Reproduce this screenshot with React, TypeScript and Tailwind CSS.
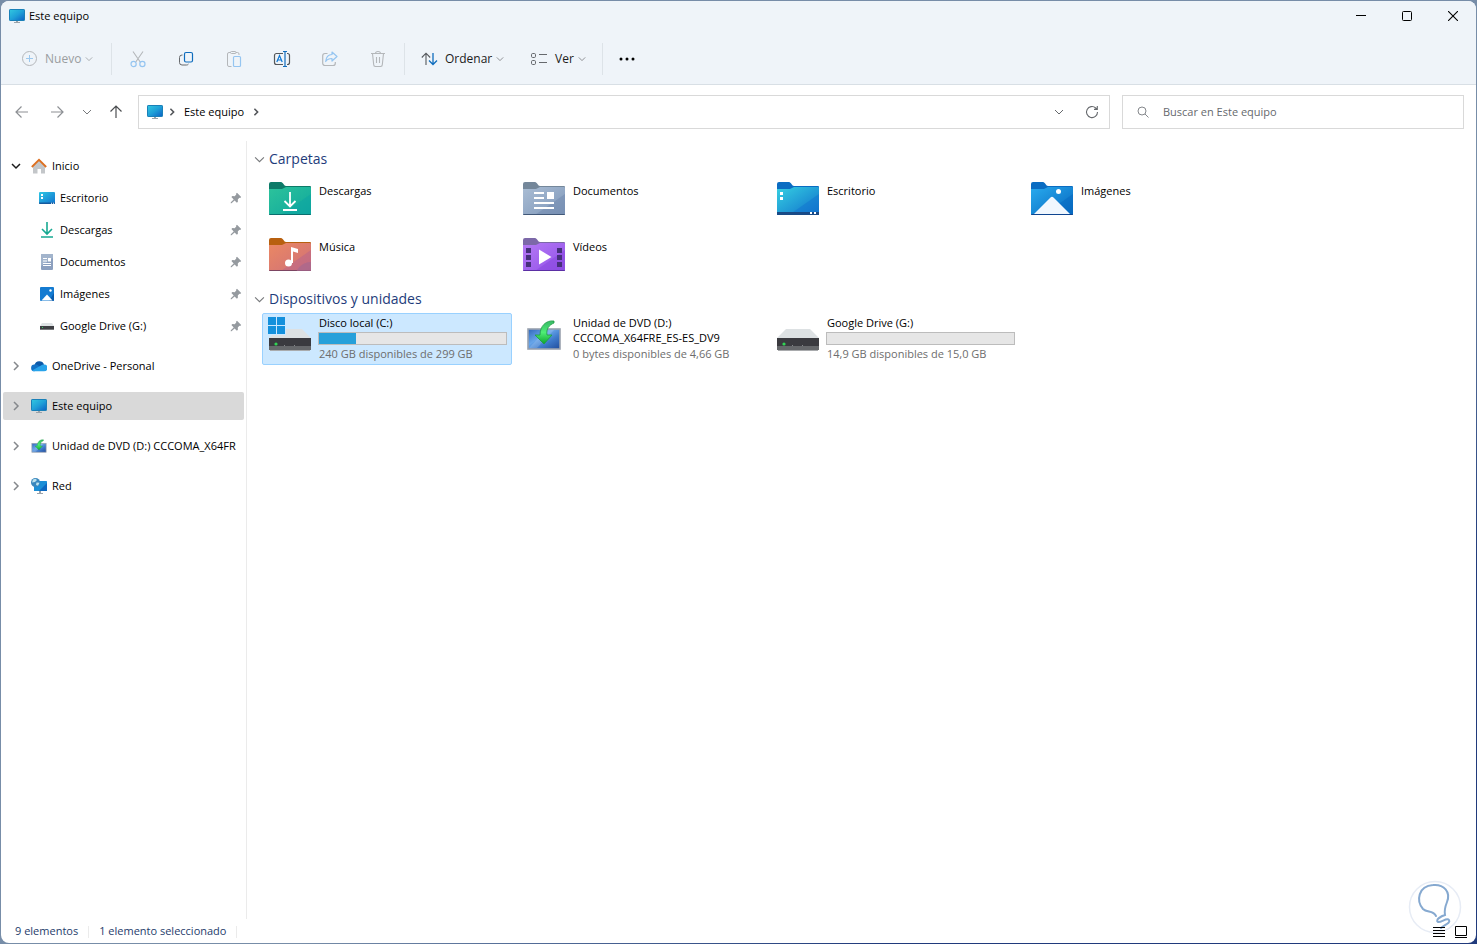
import { useState, type ReactNode } from "react";

type TreeItem = { id: string; label: string; icon: ReactNode };

type Drive = {
  id: string;
  lines: string[];
  free: string;
  icon: ReactNode;
  used?: number;
};

/* ---------- small glyphs ---------- */

type Dir = "down" | "right";

function Chevron({ dir, className = "", size = 10, weight = 1 }: { dir: Dir; className?: string; size?: number; weight?: number }) {
  return (
    <svg width={size} height={size} viewBox="0 0 10 10" fill="none" stroke="currentColor" strokeWidth={weight} className={`shrink-0 ${className}`}>
      <path d={dir === "down" ? "M1 3l4 4 4-4" : "M3 1l4 4-4 4"} />
    </svg>
  );
}

function PlusCircle() {
  return (
    <svg width="16" height="16" viewBox="0 0 16 16" fill="none" className="shrink-0">
      <circle cx="8.500" cy="7.500" r="7" stroke="#b4b7ba" />
      <path d="M8.500 4v7M5 7.500h7" stroke="#9cc8ee" />
    </svg>
  );
}

function CutIcon() {
  return (
    <svg width="18" height="18" viewBox="0 0 18 18" fill="none">
      <path d="M4 1.500l7.400 10.800M14 1.500L6.600 12.300" stroke="#b4b7ba" strokeWidth="1.100" />
      <circle cx="4.600" cy="14" r="2.600" stroke="#95c5f1" strokeWidth="1.200" />
      <circle cx="13.400" cy="14" r="2.600" stroke="#95c5f1" strokeWidth="1.200" />
    </svg>
  );
}

function CopyIcon() {
  return (
    <svg width="18" height="18" viewBox="0 0 18 18" fill="none">
      <path d="M5.500 5H5A2.500 2.500 0 0 0 2.500 7.500v5A2.500 2.500 0 0 0 5 15h4.500a2.500 2.500 0 0 0 2-1" stroke="#66696d" />
      <rect x="7.500" y="2.500" width="8" height="9.500" rx="1.500" stroke="#0f6cbd" strokeWidth="1.200" />
    </svg>
  );
}

function PasteIcon() {
  return (
    <svg width="18" height="18" viewBox="0 0 18 18" fill="none">
      <path d="M6.500 16.500H4A1.500 1.500 0 0 1 2.500 15V4A1.500 1.500 0 0 1 4 2.500h1.500M11 2.500h1.500A1.500 1.500 0 0 1 14 4v1" stroke="#b4b7ba" />
      <rect x="5.500" y="1.500" width="5.500" height="2" rx="1" stroke="#b4b7ba" />
      <rect x="8.500" y="6.500" width="7" height="10" rx="1" stroke="#95c5f1" strokeWidth="1.200" />
    </svg>
  );
}

function RenameIcon() {
  return (
    <svg width="18" height="18" viewBox="0 0 18 18" fill="none">
      <path d="M10 3.500H3.500a2 2 0 0 0-2 2v7a2 2 0 0 0 2 2H10M14 3.500h.5a2 2 0 0 1 2 2v7a2 2 0 0 1-2 2H14" stroke="#55585c" strokeWidth="1.200" />
      <path d="M12 1.500v15M10 1.500h4M10 16.500h4" stroke="#0f6cbd" strokeWidth="1.200" />
      <path d="M3.800 12L6.500 5.500 9.200 12M4.800 10h3.400" stroke="#0f78d4" strokeWidth="1.200" />
    </svg>
  );
}

function ShareIcon() {
  return (
    <svg width="18" height="18" viewBox="0 0 18 18" fill="none">
      <path d="M6.500 3.500H4a2.300 2.300 0 0 0-2.300 2.300V13A2.300 2.300 0 0 0 4 15.500h8a2.300 2.300 0 0 0 2.300-2.300V12" stroke="#b4b7ba" strokeWidth="1.200" />
      <path d="M11 2l5 4.500-5 4.500V8.500C8 8.500 6 9.500 4.700 11.500 5 7.500 7.500 4.700 11 4.500z" stroke="#95c5f1" strokeWidth="1.200" strokeLinejoin="round" />
    </svg>
  );
}

function TrashIcon() {
  return (
    <svg width="18" height="18" viewBox="0 0 18 18" fill="none" stroke="#b4b7ba" strokeWidth="1.100">
      <path d="M2 3.500h14M6.500 3.500a2.500 2 0 0 1 5 0M3.500 3.500l1.200 11.300a1.700 1.700 0 0 0 1.700 1.700h5.200a1.700 1.700 0 0 0 1.700-1.700l1.200-11.300M7.500 7v6M10.500 7v6" />
    </svg>
  );
}

function SortIcon() {
  return (
    <svg width="18" height="14" viewBox="0 0 18 14" fill="none" strokeWidth="1.100" className="shrink-0">
      <path d="M5 13V1.500M.8 5.500L5 1.200l4.200 4.300" stroke="#55585c" />
      <path d="M12 1v11.500M8 8.500l4 4 4-4" stroke="#0f6cbd" strokeWidth="1.300" />
    </svg>
  );
}

function ViewIcon() {
  return (
    <svg width="18" height="14" viewBox="0 0 18 14" fill="none" stroke="#66696d" className="shrink-0">
      <rect x=".500" y="1.500" width="4" height="4" rx="1.200" />
      <rect x=".500" y="8.500" width="4" height="4" rx="1.200" />
      <path d="M8 2.500h8M8 10.500h8" />
    </svg>
  );
}

function Arrow({ turn = "" }: { turn?: string }) {
  return (
    <svg width="14" height="14" viewBox="0 0 14 14" fill="none" stroke="currentColor" strokeWidth="1.200" className={turn}>
      <path d="M13 7H1.500M6.500 1.500L1 7l5.500 5.500" />
    </svg>
  );
}

function RefreshIcon() {
  return (
    <svg width="14" height="14" viewBox="0 0 14 14" fill="none" stroke="#66696d" strokeWidth="1.100">
      <path d="M12.500 7a5.500 5.500 0 1 1-1.800-4L12 4.200M12.300 1v3.400H9" />
    </svg>
  );
}

function SearchIcon() {
  return (
    <svg width="12" height="12" viewBox="0 0 12 12" fill="none" stroke="#85888c">
      <circle cx="5" cy="5" r="4" />
      <path d="M8 8l3.500 3.500" />
    </svg>
  );
}

function PinIcon() {
  return (
    <svg width="12" height="12" viewBox="0 0 12 12" className="shrink-0" fill="#959a9f">
      <path d="M7 .8L11.200 5l-1 1-.8-.2-1.600 1.600.1 2.300-1 1L4.600 8.400 1.500 11.300l-.8-.1.1-.9L3.700 7.400 1.400 5.100l1-1 2.300.1 1.600-1.600L6 1.800z" />
    </svg>
  );
}

/* ---------- coloured icons ---------- */

function MonitorIcon({ id }: { id: string }) {
  return (
    <svg width="16" height="16" viewBox="0 0 16 16" className="shrink-0">
      <linearGradient id={id} x1="0" y1="0" x2="1" y2="1">
        <stop offset="0" stopColor="#32c8e0" />
        <stop offset=".5" stopColor="#1fa0d8" />
        <stop offset="1" stopColor="#0c60c4" />
      </linearGradient>
      <path d="M7 13h2v1h2v1H5v-1h2z" fill="#9aa3ab" />
      <rect x=".500" y="1.500" width="15" height="11" rx=".6" fill={`url(#${id})`} stroke="#1a80b8" />
    </svg>
  );
}

function HomeIcon() {
  return (
    <svg width="16" height="16" viewBox="0 0 16 16" className="shrink-0">
      <path d="M2 8l6-6 6 6v7.500H10V11H6.500v4.500H2z" fill="#c3c6c9" />
      <path d="M.8 9L8 1.800 15.200 9" fill="none" stroke="#dd7021" strokeWidth="1.800" />
    </svg>
  );
}

function DesktopSmall() {
  return (
    <svg width="16" height="16" viewBox="0 0 16 16" className="shrink-0">
      <linearGradient id="desk-s" x1="0" y1="0" x2="1" y2="1">
        <stop offset="0" stopColor="#30c8e4" />
        <stop offset="1" stopColor="#0f72cf" />
      </linearGradient>
      <rect y="2" width="16" height="12" rx="1" fill="url(#desk-s)" />
      <path d="M0 12.500h16v.5a1 1 0 0 1-1 1H1a1 1 0 0 1-1-1z" fill="#155a9e" />
      <path d="M2 4h2v2H2zM2 7h2v2H2zM12 12.700h1v1h-1zM14 12.700h1v1h-1z" fill="#fff" />
    </svg>
  );
}

function DownloadSmall() {
  return (
    <svg width="16" height="16" viewBox="0 0 16 16" fill="none" stroke="#17a992" strokeWidth="1.600" className="shrink-0">
      <path d="M8 0v12M3 7l5 5 5-5M2 15h12" />
    </svg>
  );
}

function DocumentSmall() {
  return (
    <svg width="16" height="16" viewBox="0 0 16 16" className="shrink-0">
      <rect x="2" width="12" height="16" rx="1" fill="#8ca0bf" />
      <path d="M2 1a1 1 0 0 1 1-1h10a1 1 0 0 1 1 1v3L2 12z" fill="#a2b4cc" />
      <path d="M4 4h4v1H4zM4 6.500h4v1H4zM9 4h3v3.500H9zM4 9h8v1H4zM4 11h8v1H4z" fill="#fff" />
    </svg>
  );
}

function PictureSmall() {
  return (
    <svg width="16" height="16" viewBox="0 0 16 16" className="shrink-0">
      <rect x="1" y="1" width="14" height="14" rx="1" fill="#147bd1" />
      <path d="M10 15h4a1 1 0 0 0 1-1V7z" fill="#0a5cad" />
      <path d="M2.500 14.500l5.500-6 5.500 6z" fill="#fff" />
      <circle cx="11.500" cy="4.500" r="1.200" fill="#fff" />
    </svg>
  );
}

function DriveSmall() {
  return (
    <svg width="16" height="16" viewBox="0 0 16 16" className="shrink-0">
      <path d="M3 5h10l2 3H1z" fill="#dfe3e5" />
      <path d="M1 8h14v4H1z" fill="#3e3f43" />
      <path d="M1 11h14v1H1z" fill="#77797c" />
      <path d="M3 9h1v1H3z" fill="#37d35f" />
    </svg>
  );
}

function CloudIcon() {
  return (
    <svg width="16" height="16" viewBox="0 0 16 16" className="shrink-0">
      <path d="M3.500 7A5 5 0 0 1 13 6.500L9 10H2z" fill="#0c59a8" />
      <path d="M3.500 6.500A3.400 3.400 0 0 0 3.500 13.300L10 9.500 7 7.200a4 4 0 0 0-3.500-.7z" fill="#1272c6" />
      <path d="M1 12.500l9-5a4 4 0 0 1 3-1.100A3.400 3.400 0 0 1 13 13.300H3.500A3.400 3.400 0 0 1 1 12.500z" fill="#28a3ea" />
    </svg>
  );
}

function InstallDisc({ size, id }: { size: number; id: string }) {
  return (
    <svg width={size} height={size} viewBox="0 0 36 36" className="shrink-0">
      <linearGradient id={`${id}-s`} x1="0" y1="0" x2="1" y2="1">
        <stop offset="0" stopColor="#2f66ba" />
        <stop offset=".4" stopColor="#67a5e9" />
        <stop offset=".65" stopColor="#3e7acb" />
        <stop offset="1" stopColor="#214c9b" />
      </linearGradient>
      <linearGradient id={`${id}-a`} x1="0" y1="0" x2="0" y2="1">
        <stop offset="0" stopColor="#38b866" />
        <stop offset=".5" stopColor="#4eee76" />
        <stop offset="1" stopColor="#0da32c" />
      </linearGradient>
      <rect x="2" y="12" width="32" height="20" fill={`url(#${id}-s)`} stroke="#9aa2ae" strokeWidth="1.600" />
      <path d="M3 31L20 13h8L11 31z" fill="#fff" opacity=".15" />
      <path d="M28 4C20 3 14 9 14 18H9l9 9 8-9h-5c-1-6 2-10 7-12z" fill={`url(#${id}-a)`} stroke="#1e9b43" strokeWidth=".8" />
    </svg>
  );
}

function NetworkIcon() {
  return (
    <svg width="16" height="16" viewBox="0 0 16 16" className="shrink-0">
      <path d="M8 13h2v2h2v1H6v-1h2z" fill="#9aa3ab" />
      <rect x="3" y="3" width="13" height="10" rx=".6" fill="#1b8fd6" />
      <path d="M16 5v8H8z" fill="#0c68c0" />
      <circle cx="4.500" cy="4.500" r="4.500" fill="#3987bd" />
      <path d="M2 1.500l2.500-.8L6 2 4 4 1 4.500zM5.500 4.500l3 .3L7 7.800 5 7z" fill="#bce2ee" />
    </svg>
  );
}

type FolderColors = { back: string; from: string; to: string; shade: string; edge: string };

function Folder({ id, colors, children }: { id: string; colors: FolderColors; children: ReactNode }) {
  return (
    <svg width="42" height="34" viewBox="0 0 42 34" className="shrink-0">
      <defs>
        <linearGradient id={id} x1="0" y1="0" x2="1" y2="1">
          <stop offset="0" stopColor={colors.from} />
          <stop offset="1" stopColor={colors.to} />
        </linearGradient>
        <clipPath id={`${id}-clip`}>
          <path d="M0 7h13l4-2h24a1 1 0 0 1 1 1v26a1 1 0 0 1-1 1H1a1 1 0 0 1-1-1z" />
        </clipPath>
      </defs>
      <path d="M0 2a2 2 0 0 1 2-2h10c2 0 3 4 5 4h24a1 1 0 0 1 1 1v6H0z" fill={colors.back} />
      <g clipPath={`url(#${id}-clip)`}>
        <path d="M0 5h42v28H0z" fill={`url(#${id})`} />
        <path d="M42 12v21H12z" fill={colors.shade} opacity=".5" />
        <path d="M0 32h42v1H0z" fill={colors.edge} />
        {children}
      </g>
    </svg>
  );
}

function HardDrive({ windows = false }: { windows?: boolean }) {
  return (
    <svg width="42" height="34" viewBox="0 0 42 34" className="shrink-0 overflow-visible">
      <path d="M9 11h24l9 9v3H0v-3z" fill="#dde1e3" />
      <path d="M0 20h42v8H0z" fill="#3a3a3f" />
      <path d="M0 28h42v4H0z" fill="#66686b" />
      <path d="M1 32h40v1H1z" fill="#a9abad" />
      <circle cx="7" cy="26" r="1.600" fill="#31d553" />
      <path d="M15 27h1v1h-1zM25 27h1v1h-1z" fill="#85878a" />
      {windows && (
        <>
          <path d="M-1-1h18v18H-1z" fill="#cce8ff" />
          <path d="M-1-1h8v8h-8zM8-1h8v8H8zM-1 8h8v8h-8zM8 8h8v8H8z" fill="#1490dc" />
        </>
      )}
    </svg>
  );
}

/* ---------- data ---------- */

const QUICK_ACCESS: TreeItem[] = [
  { id: "desktop", label: "Escritorio", icon: <DesktopSmall /> },
  { id: "downloads", label: "Descargas", icon: <DownloadSmall /> },
  { id: "documents", label: "Documentos", icon: <DocumentSmall /> },
  { id: "pictures", label: "Imágenes", icon: <PictureSmall /> },
  { id: "gdrive", label: "Google Drive (G:)", icon: <DriveSmall /> },
];

const ROOTS: TreeItem[] = [
  { id: "onedrive", label: "OneDrive - Personal", icon: <CloudIcon /> },
  { id: "pc", label: "Este equipo", icon: <MonitorIcon id="mon-tree" /> },
  { id: "dvd", label: "Unidad de DVD (D:) CCCOMA_X64FR", icon: <InstallDisc size={16} id="disc-s" /> },
  { id: "network", label: "Red", icon: <NetworkIcon /> },
];

const FOLDERS: TreeItem[] = [
  {
    id: "downloads",
    label: "Descargas",
    icon: (
      <Folder id="f-down" colors={{ back: "#0d7a68", from: "#2cc39b", to: "#10a79d", shade: "#0ba3a3", edge: "#0b6e6e" }}>
        <path d="M21 10v14M15.500 19l5.500 5.500 5.500-5.500M14 28h14" fill="none" stroke="#fff" strokeWidth="1.800" />
      </Folder>
    ),
  },
  {
    id: "documents",
    label: "Documentos",
    icon: (
      <Folder id="f-docs" colors={{ back: "#74879a", from: "#aabdd4", to: "#7e97b9", shade: "#7088ad", edge: "#415878" }}>
        <path d="M11 10h10v2H11zM11 15h10v2H11zM24 10h7v7h-7zM11 20h20v2H11zM11 25h20v2H11z" fill="#fff" />
      </Folder>
    ),
  },
  {
    id: "desktop",
    label: "Escritorio",
    icon: (
      <Folder id="f-desk" colors={{ back: "#0a6cc2", from: "#36d0e2", to: "#0f6fcb", shade: "#1174cf", edge: "#123c7c" }}>
        <path d="M0 30h42v3H0z" fill="#194a86" />
        <path d="M3 10h3v3H3zM3 15h3v3H3zM33 30h2v2h-2zM37 30h2v2h-2z" fill="#fff" />
      </Folder>
    ),
  },
  {
    id: "pictures",
    label: "Imágenes",
    icon: (
      <Folder id="f-pics" colors={{ back: "#0a6cc2", from: "#29abee", to: "#0666be", shade: "#0668c0", edge: "#0f4590" }}>
        <path d="M3 32l16.500-16.500a2 2 0 0 1 3 0L39 32z" fill="#f0f7fe" />
        <circle cx="27.500" cy="9.500" r="2.500" fill="#fff" />
      </Folder>
    ),
  },
  {
    id: "music",
    label: "Música",
    icon: (
      <Folder id="f-music" colors={{ back: "#b8600f", from: "#eb8863", to: "#cf7078", shade: "#b8648c", edge: "#7c4562" }}>
        <circle cx="42" cy="40" r="16" fill="#a7688f" opacity=".7" />
        <circle cx="19.500" cy="25" r="3.500" fill="#fff" />
        <path d="M22 9l7 2v4l-5-1.500V25h-2z" fill="#fff" />
      </Folder>
    ),
  },
  {
    id: "videos",
    label: "Vídeos",
    icon: (
      <Folder id="f-video" colors={{ back: "#7c68a8", from: "#b57af5", to: "#9150e8", shade: "#8746dd", edge: "#5b2fa4" }}>
        <path d="M3 10h5v5H3zM3 17h5v5H3zM3 24h5v5H3zM34 10h5v5h-5zM34 17h5v5h-5zM34 24h5v5h-5z" fill="#46307b" />
        <path d="M16 11.500v15L28.500 19z" fill="#fff" />
      </Folder>
    ),
  },
];

const DRIVES: Drive[] = [
  { id: "c", lines: ["Disco local (C:)"], used: 20, free: "240 GB disponibles de 299 GB", icon: <HardDrive windows /> },
  {
    id: "d",
    lines: ["Unidad de DVD (D:)", "CCCOMA_X64FRE_ES-ES_DV9"],
    free: "0 bytes disponibles de 4,66 GB",
    icon: <InstallDisc size={36} id="disc-l" />,
  },
  { id: "g", lines: ["Google Drive (G:)"], used: 0, free: "14,9 GB disponibles de 15,0 GB", icon: <HardDrive /> },
];

const TOOLS = [
  { label: "Cortar", icon: <CutIcon />, disabled: true },
  { label: "Copiar", icon: <CopyIcon />, disabled: false },
  { label: "Pegar", icon: <PasteIcon />, disabled: true },
  { label: "Cambiar nombre", icon: <RenameIcon />, disabled: false },
  { label: "Compartir", icon: <ShareIcon />, disabled: true },
  { label: "Eliminar", icon: <TrashIcon />, disabled: true },
];

/* ---------- sections ---------- */

function TitleBar() {
  return (
    <div className="flex h-[30px] items-center justify-between pl-2">
      <div className="flex items-center gap-1">
        <MonitorIcon id="mon-title" />
        <h1>Este equipo</h1>
      </div>
      <div className="flex h-full">
        <button aria-label="Minimizar" className="flex w-[46px] items-center justify-center hover:bg-black/5">
          <svg width="10" height="10" viewBox="0 0 10 10" stroke="#000"><path d="M0 4.500h10" /></svg>
        </button>
        <button aria-label="Maximizar" className="flex w-[46px] items-center justify-center hover:bg-black/5">
          <svg width="10" height="10" viewBox="0 0 10 10" fill="none" stroke="#000"><rect x=".500" y=".500" width="9" height="9" rx="1" /></svg>
        </button>
        <button aria-label="Cerrar" className="flex w-[46px] items-center justify-center hover:bg-red-600">
          <svg width="10" height="10" viewBox="0 0 10 10" stroke="#000" strokeWidth="1.100"><path d="M0 0l10 10M10 0L0 10" /></svg>
        </button>
      </div>
    </div>
  );
}

function Divider() {
  return <div className="h-8 w-px shrink-0 bg-[#dde3e8]" />;
}

function Toolbar() {
  return (
    <div className="flex h-[53px] items-center pt-0.5 pl-3 text-xs">
      <button disabled className="flex h-8 w-[90px] items-center gap-1 pl-2 text-[#9a9da0]">
        <PlusCircle />
        <span className="ml-1">Nuevo</span>
        <Chevron dir="down" size={8} />
      </button>
      <div className="w-2" />
      <Divider />
      <div className="flex px-0.5">
        {TOOLS.map((t) => (
          <button key={t.label} aria-label={t.label} disabled={t.disabled} className="flex h-8 w-12 items-center justify-center">
            {t.icon}
          </button>
        ))}
      </div>
      <Divider />
      <button className="ml-2 flex h-8 w-[100px] items-center gap-1 pl-2 text-[#1b1b1b]">
        <SortIcon />
        <span className="ml-0.5">Ordenar</span>
        <Chevron dir="down" size={8} className="text-[#77797c]" />
      </button>
      <button className="ml-2.5 flex h-8 w-[72px] items-center gap-1 pl-2 text-[#1b1b1b]">
        <ViewIcon />
        <span className="ml-0.5">Ver</span>
        <Chevron dir="down" size={8} className="text-[#77797c]" />
      </button>
      <div className="w-[7px]" />
      <Divider />
      <button aria-label="Ver más" className="ml-2 flex h-8 w-8 items-center justify-center">
        <svg width="16" height="4" viewBox="0 0 16 4">
          <circle cx="2" cy="2" r="1.500" />
          <circle cx="8" cy="2" r="1.500" />
          <circle cx="14" cy="2" r="1.500" />
        </svg>
      </button>
    </div>
  );
}

function AddressRow() {
  const [query, setQuery] = useState("");
  return (
    <div className="flex items-center pt-2.5 pr-3 pb-3 pl-1">
      <button aria-label="Atrás" className="flex h-8 w-[34px] items-center justify-center text-[#8d9094]"><Arrow /></button>
      <button aria-label="Adelante" className="flex h-8 w-9 items-center justify-center text-[#8d9094]"><Arrow turn="rotate-180" /></button>
      <button aria-label="Ubicaciones recientes" className="flex h-8 w-6 items-center justify-center text-[#77797c]"><Chevron dir="down" /></button>
      <button aria-label="Subir" className="flex h-8 w-[34px] items-center justify-center text-[#4d4f52]"><Arrow turn="rotate-90" /></button>
      <div className="ml-[5px] flex h-[34px] flex-1 items-center border border-[#d9d9d9] pl-2">
        <MonitorIcon id="mon-path" />
        <Chevron dir="right" size={8} weight={2} className="ml-[5px] text-[#55585c]" />
        <button className="ml-2 h-8">Este equipo</button>
        <Chevron dir="right" size={8} weight={2} className="ml-2 text-[#55585c]" />
        <button aria-label="Ubicaciones anteriores" className="ml-auto flex h-8 w-8 items-center justify-center text-[#66696d]"><Chevron dir="down" /></button>
        <button aria-label="Actualizar" className="flex h-8 w-[34px] items-center justify-center"><RefreshIcon /></button>
      </div>
      <label className="ml-3 flex h-[34px] w-[342px] items-center gap-3.5 border border-[#d9d9d9] px-3.5">
        <SearchIcon />
        <input
          type="search"
          aria-label="Buscar en Este equipo"
          value={query}
          onChange={(e) => setQuery(e.target.value)}
          placeholder="Buscar en Este equipo"
          className="min-w-0 flex-1 outline-none placeholder:text-[#66696d]"
        />
      </label>
    </div>
  );
}

function Sidebar() {
  const [active, setActive] = useState("pc");
  return (
    <nav className="w-[246px] shrink-0 overflow-hidden border-r border-[#ebebeb] pt-[11px] pr-0.5 pl-0.5">
      <button className="flex h-7 w-full items-center gap-[5px] pl-2 text-left">
        <Chevron dir="down" weight={1.5} className="mr-[5px] text-[#1b1b1b]" />
        <HomeIcon />
        Inicio
      </button>
      <ul className="mt-1 space-y-1">
        {QUICK_ACCESS.map((item) => (
          <li key={item.id}>
            <button className="flex h-7 w-full items-center gap-[5px] pr-0.5 pl-9 text-left">
              {item.icon}
              <span className="flex-1">{item.label}</span>
              <PinIcon />
            </button>
          </li>
        ))}
      </ul>
      <ul className="mt-3 space-y-3">
        {ROOTS.map((item) => (
          <li key={item.id}>
            <button
              onClick={() => setActive(item.id)}
              className={`flex h-7 w-full items-center gap-[5px] overflow-hidden rounded-[2px] pl-2 text-left ${active === item.id ? "bg-[#d9d9d9]" : ""}`}
            >
              <Chevron dir="right" weight={1.5} className="mr-[5px] text-[#85888c]" />
              {item.icon}
              <span className="whitespace-nowrap">{item.label}</span>
            </button>
          </li>
        ))}
      </ul>
    </nav>
  );
}

function GroupHeading({ children }: { children: ReactNode }) {
  return (
    <h2 className="flex h-7 items-center gap-1 text-sm text-[#1e3c7b]">
      <Chevron dir="down" size={11} className="text-[#77797c]" />
      {children}
    </h2>
  );
}

function DriveTile({ drive, selected, onSelect }: { drive: Drive; selected: boolean; onSelect: () => void }) {
  return (
    <button
      onClick={onSelect}
      className={`flex h-[52px] items-start border px-1 pt-px text-left leading-[15px] ${selected ? "rounded-[2px] border-[#99d1ff] bg-[#cce8ff]" : "border-transparent"}`}
    >
      <span className="mr-1.5 flex h-9 w-[46px] shrink-0 items-center justify-center pt-1">{drive.icon}</span>
      <span className="flex min-w-0 flex-1 flex-col">
        {drive.lines.map((line) => (
          <span key={line}>{line}</span>
        ))}
        {drive.used !== undefined && (
          <span
            role="progressbar"
            aria-label="Espacio usado"
            aria-valuenow={drive.used}
            className="mt-0.5 -ml-px block h-[13px] w-[189px] border border-[#bcbcbc] bg-[#e6e6e6]"
          >
            <span className="block h-full bg-[#26a0da]" style={{ width: `${drive.used}%` }} />
          </span>
        )}
        <span className="mt-px text-[#6d6d6d]">{drive.free}</span>
      </span>
    </button>
  );
}

function Content() {
  const [selected, setSelected] = useState("c");
  return (
    <main className="flex-1 pt-1 pl-[7px]">
      <section>
        <GroupHeading>Carpetas</GroupHeading>
        <div className="grid grid-cols-[repeat(4,250px)] gap-1 pl-2">
          {FOLDERS.map((f) => (
            <button key={f.id} className="flex h-[52px] items-start gap-2 pt-[9px] pl-[7px] text-left leading-[18px]">
              {f.icon}
              {f.label}
            </button>
          ))}
        </div>
      </section>
      <section className="mt-1">
        <GroupHeading>Dispositivos y unidades</GroupHeading>
        <div className="grid grid-cols-[repeat(4,250px)] gap-1 pl-2">
          {DRIVES.map((d) => (
            <DriveTile key={d.id} drive={d} selected={selected === d.id} onSelect={() => setSelected(d.id)} />
          ))}
        </div>
      </section>
    </main>
  );
}

function StatusBar() {
  return (
    <footer className="relative flex h-6 items-center pt-px pr-[9px] pl-3.5 text-[#1e3c6b]">
      <span>9 elementos</span>
      <span className="mx-2.5 h-3 w-px bg-[#ebebeb]" />
      <span>1 elemento seleccionado</span>
      <span className="mx-2.5 h-3 w-px bg-[#ebebeb]" />
      <svg width="54" height="54" viewBox="0 0 54 54" fill="none" className="absolute right-3.5 bottom-[9px]">
        <circle cx="27" cy="27" r="25.500" stroke="#e7ecf5" strokeWidth="1.500" />
        <path
          d="M28 36C25 30 19 33 15 29C8 21 10 6 25 5C36 4 43 12 39 22C37 27 36 30 37 35C33 36 27 40 30 42C33 43 39 37 41 40C43 43 36 45 33 48"
          stroke="#86a9d0"
          strokeWidth="2"
          strokeLinecap="round"
        />
      </svg>
      <div className="relative ml-auto flex gap-2.5">
        <button aria-label="Detalles">
          <svg width="12" height="12" viewBox="0 0 12 12" stroke="#000"><path d="M0 1.500h12M0 4.500h12M0 7.500h12M0 10.500h12" /></svg>
        </button>
        <button aria-label="Iconos grandes">
          <svg width="12" height="12" viewBox="0 0 12 12" fill="none" stroke="#000"><path d="M.500.500h11v9H.500zM0 11.500h12" /></svg>
        </button>
      </div>
    </footer>
  );
}

export default function App() {
  return (
    <div className="flex min-h-screen flex-col bg-linear-to-br from-[#778da8] from-60% to-[#203a7c] to-80% p-px font-['Open_Sans','Noto_Sans',sans-serif] text-[11px] text-black">
      <div className="flex flex-1 flex-col overflow-hidden rounded-lg bg-white">
        <header className="border-b border-[#d8dfe5] bg-[#eff4f9]">
          <TitleBar />
          <Toolbar />
        </header>
        <AddressRow />
        <div className="flex flex-1">
          <Sidebar />
          <Content />
        </div>
        <StatusBar />
      </div>
    </div>
  );
}
